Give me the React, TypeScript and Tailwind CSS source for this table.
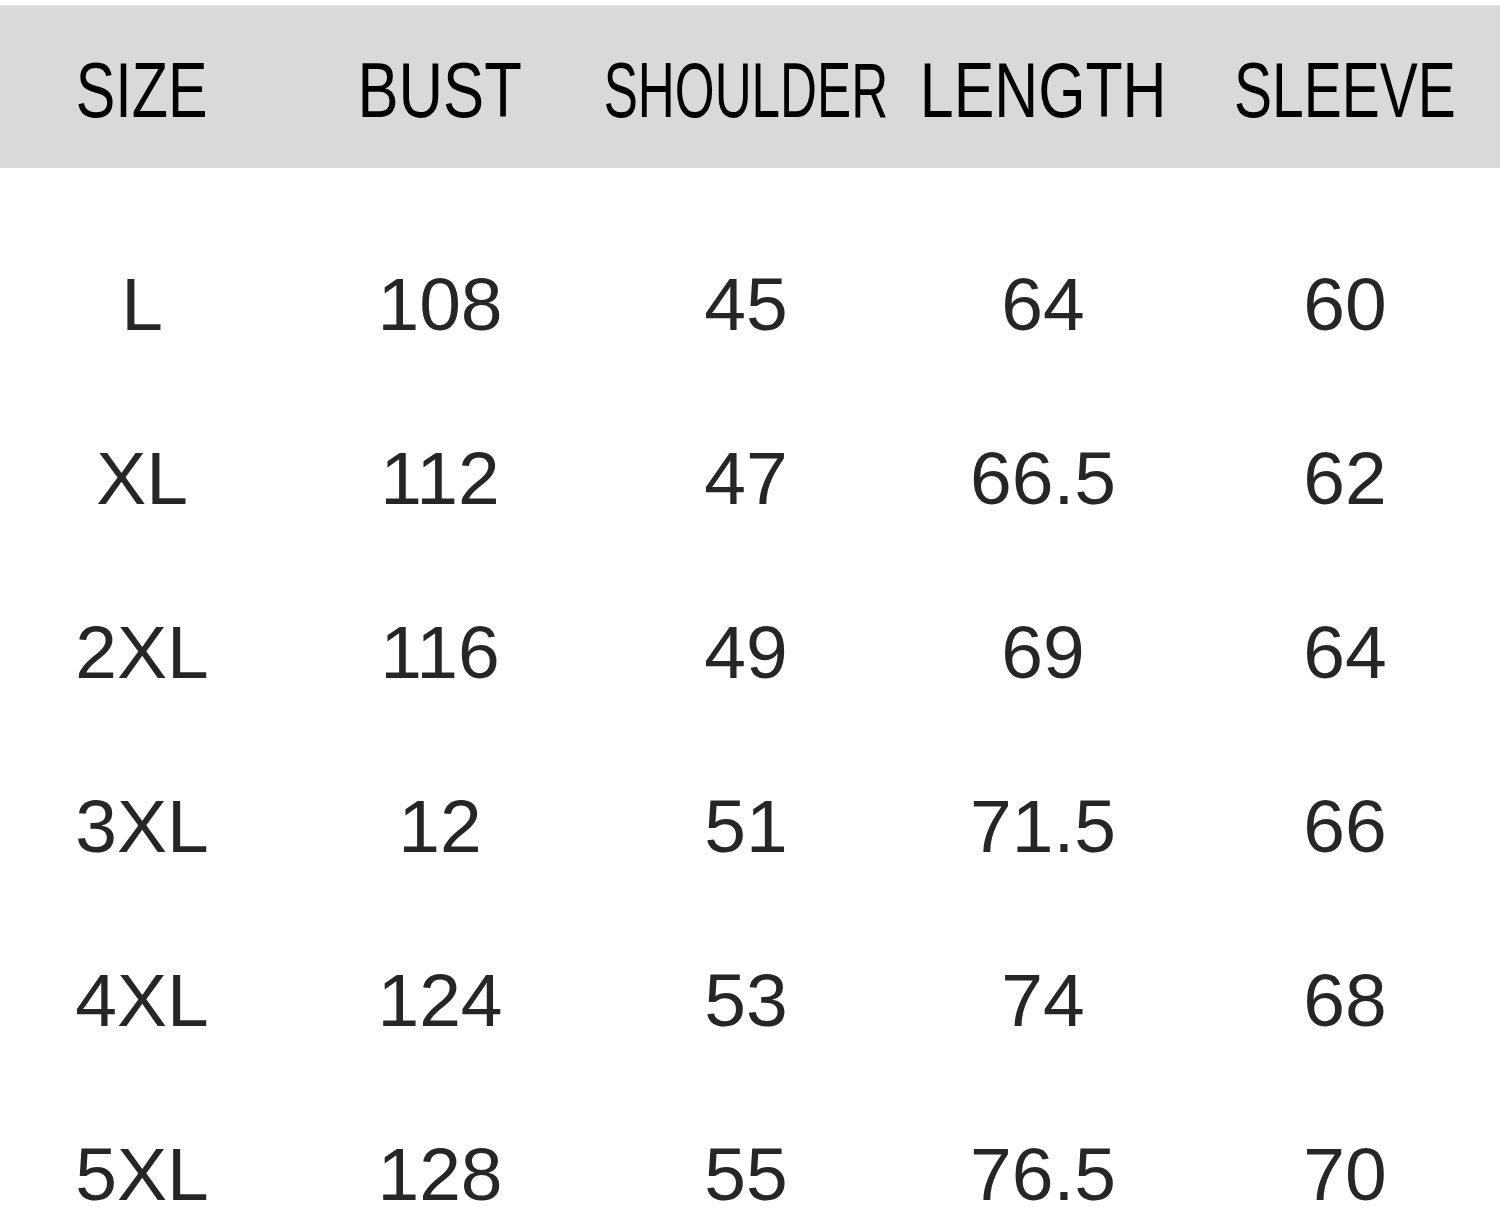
const headers = [
  { label: "SIZE", squeeze: "scale-x-[0.77]" },
  { label: "BUST", squeeze: "scale-x-[0.8]" },
  { label: "SHOULDER", squeeze: "scale-x-[0.665]" },
  { label: "LENGTH", squeeze: "scale-x-[0.79]" },
  { label: "SLEEVE", squeeze: "scale-x-[0.74]" },
];

const rows = [
  ["L", "108", "45", "64", "60"],
  ["XL", "112", "47", "66.5", "62"],
  ["2XL", "116", "49", "69", "64"],
  ["3XL", "12", "51", "71.5", "66"],
  ["4XL", "124", "53", "74", "68"],
  ["5XL", "128", "55", "76.5", "70"],
];

const cols = "grid grid-cols-[284px_312px_300px_294px_310px]";

export default function App() {
  return (
    <div className="w-[1500px] h-[1208px] overflow-hidden bg-white">
      {/* header band */}
      <div className={`${cols} mt-[5px] h-[163px] items-center bg-[#d9d9d9] border-t border-[#e4e4e4]`}>
        {headers.map((h) => (
          <div key={h.label} className="flex justify-center">
            <span
              className={`inline-block ${h.squeeze} text-[77px] leading-none text-black font-['Liberation_Sans_Narrow','Liberation_Sans',sans-serif] pt-[6px]`}
            >
              {h.label}
            </span>
          </div>
        ))}
      </div>

      {/* measurements */}
      <div className="pt-[49px]">
        {rows.map((r) => (
          <div key={r[0]} className={`${cols} h-[174px] items-center`}>
            {r.map((v, i) => (
              <div
                key={i}
                className="text-center text-[75px] leading-[64px] text-[#262626] font-['Liberation_Sans',Arial,sans-serif]"
              >
                {v}
              </div>
            ))}
          </div>
        ))}
      </div>
    </div>
  );
}
